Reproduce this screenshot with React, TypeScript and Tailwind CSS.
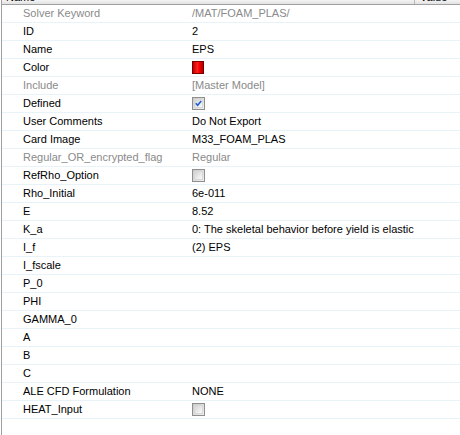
import React from 'react';

type Row = {
  label: string;
  value?: string;
  kind?: 'text' | 'color' | 'check' | 'uncheck';
  disabled?: boolean;
};

const rows: Row[] = [
  { label: 'Solver Keyword', value: '/MAT/FOAM_PLAS/', disabled: true },
  { label: 'ID', value: '2' },
  { label: 'Name', value: 'EPS' },
  { label: 'Color', kind: 'color' },
  { label: 'Include', value: '[Master Model]', disabled: true },
  { label: 'Defined', kind: 'check' },
  { label: 'User Comments', value: 'Do Not Export' },
  { label: 'Card Image', value: 'M33_FOAM_PLAS' },
  { label: 'Regular_OR_encrypted_flag', value: 'Regular', disabled: true },
  { label: 'RefRho_Option', kind: 'uncheck' },
  { label: 'Rho_Initial', value: '6e-011' },
  { label: 'E', value: '8.52' },
  { label: 'K_a', value: '0: The skeletal behavior before yield is elastic' },
  { label: 'I_f', value: '(2) EPS' },
  { label: 'I_fscale' },
  { label: 'P_0' },
  { label: 'PHI' },
  { label: 'GAMMA_0' },
  { label: 'A' },
  { label: 'B' },
  { label: 'C' },
  { label: 'ALE CFD Formulation', value: 'NONE' },
  { label: 'HEAT_Input', kind: 'uncheck' },
];

function CheckBox({ checked }: { checked: boolean }) {
  return (
    <div className="h-[13px] w-[13px] border border-[#8f8f8f] bg-[linear-gradient(135deg,#c8c8c8_0%,#f0f0f0_100%)] p-px">
      <div className="h-full w-full border border-[#d8d8d8] bg-[linear-gradient(135deg,#d4d4d4_0%,#fafafa_100%)]">
        {checked && (
          <svg viewBox="0 0 9 9" className="h-full w-full">
            <path d="M1 4.2 L3.4 6.8 L8 1.2" fill="none" stroke="#1f5fd0" strokeWidth="2" />
          </svg>
        )}
      </div>
    </div>
  );
}

function Value({ row }: { row: Row }) {
  if (row.kind === 'color') {
    return (
      <div className="h-[13px] w-[12px] border border-[#7a0000] bg-[linear-gradient(90deg,#c00000_0%,#ff2020_45%,#ff0000_60%,#b00000_100%)]" />
    );
  }
  if (row.kind === 'check') return <CheckBox checked />;
  if (row.kind === 'uncheck') return <CheckBox checked={false} />;
  return <span className={row.disabled ? 'text-[#8a8a8a]' : 'text-black'}>{row.value}</span>;
}

export default function App() {
  return (
    <div className="h-[435px] w-[460px] overflow-hidden bg-white font-['Liberation_Sans',Arial,sans-serif] text-[11px]">
      <div className="ml-px h-full border-l border-[#a0a0a0]">
        <div className="h-[5px] overflow-hidden border-b border-[#a0a0a0] bg-[linear-gradient(180deg,#f4f4f4_0%,#e2e2e2_100%)]">
          <div className="-mt-[9px] flex leading-[13px]">
            <div className="w-[413px] border-r border-[#b8b8b8] pl-[4px]">Name</div>
            <div className="pl-[5px]">Value</div>
          </div>
        </div>
        {rows.map((row) => (
          <div key={row.label} className="flex h-[18px] items-center border-b border-[#e8f2f9]">
            <div
              className={`w-[190px] shrink-0 truncate pl-[21px] ${row.disabled ? 'text-[#8a8a8a]' : 'text-black'}`}
            >
              {row.label}
            </div>
            <div className="flex min-w-0 flex-1 items-center whitespace-nowrap">
              <Value row={row} />
            </div>
          </div>
        ))}
      </div>
    </div>
  );
}
